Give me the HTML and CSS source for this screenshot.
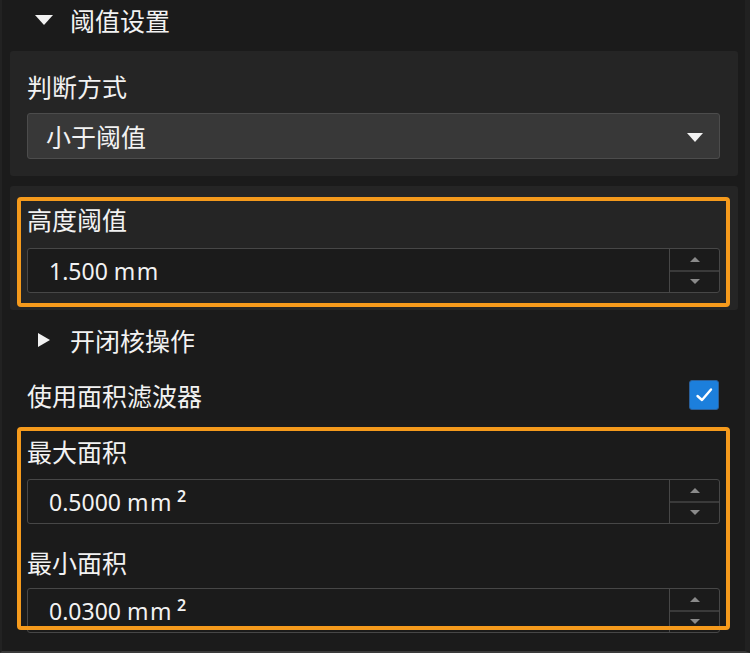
FILE: index.html
```html
<!DOCTYPE html>
<html lang="zh-CN">
<head>
    <meta charset="UTF-8">
    <title>阈值设置</title>
    <link rel="stylesheet" href="styles.css">
</head>
<body>
    <div class="panel-root">
        <div class="section-head">
            <span class="arrow-down"></span>
            <span>阈值设置</span>
        </div>

        <div class="panel">
            <div class="field-label">判断方式</div>
            <div class="select-box">
                <span>小于阈值</span>
                <span class="select-arrow"></span>
            </div>
        </div>

        <div class="panel panel-tight">
            <div class="highlight">
                <div class="field-label">高度阈值</div>
                <div class="spin-box">
                    <span class="spin-value">1.500 <span class="unit">mm</span></span>
                    <div class="spin-buttons">
                        <span class="spin-up"></span>
                        <span class="spin-down"></span>
                    </div>
                </div>
            </div>
        </div>

        <div class="section-head sub-head">
            <span class="arrow-right"></span>
            <span>开闭核操作</span>
        </div>

        <div class="check-row">
            <span>使用面积滤波器</span>
            <span class="check-box">
                <svg width="22" height="22" viewBox="0 0 22 22">
                    <path d="M4.5 12 L9 16 L18 5.5" fill="none" stroke="#ffffff" stroke-width="2.4" stroke-linecap="round" stroke-linejoin="round"/>
                </svg>
            </span>
        </div>

        <div class="highlight area-group">
            <div class="field-label">最大面积</div>
            <div class="spin-box">
                <span class="spin-value">0.5000 <span class="unit">mm</span><sup>2</sup></span>
                <div class="spin-buttons">
                    <span class="spin-up"></span>
                    <span class="spin-down"></span>
                </div>
            </div>
            <div class="field-label second">最小面积</div>
            <div class="spin-box">
                <span class="spin-value">0.0300 <span class="unit">mm</span><sup>2</sup></span>
                <div class="spin-buttons">
                    <span class="spin-up"></span>
                    <span class="spin-down"></span>
                </div>
            </div>
        </div>
    </div>
</body>
</html>
```

FILE: styles.css
```css
body {
    margin: 0;
    background-color: #1b1b1b;
    color: #f2f2f2;
    font-family: "Noto Sans", "Noto Sans CJK SC", sans-serif;
    font-size: 25px;
}
.panel-root {
    width: 750px;
    height: 653px;
    box-sizing: border-box;
    border-left: 2px solid #222222;
    border-right: 5px solid #212121;
    border-bottom: 2px solid #3a3a3a;
    overflow: hidden;
}
.section-head {
    height: 40px;
    display: flex;
    align-items: center;
    padding-left: 33px;
    margin-bottom: 11px;
}
.arrow-down {
    width: 0;
    height: 0;
    border-left: 9px solid transparent;
    border-right: 9px solid transparent;
    border-top: 10px solid #f2f2f2;
    margin-right: 17px;
}
.sub-head {
    margin: 9px 0 0;
    height: 42px;
    padding-left: 36px;
}
.arrow-right {
    width: 0;
    height: 0;
    border-top: 7.5px solid transparent;
    border-bottom: 7.5px solid transparent;
    border-left: 12px solid #f2f2f2;
    margin-right: 20px;
}
.panel {
    margin: 0 7px 10px 8px;
    padding: 19px 18px 17px 17px;
    background-color: #252525;
    border-radius: 3px;
}
.panel-tight {
    padding: 11px 8px 3px 7px;
    margin-bottom: 0;
}
.field-label {
    height: 34px;
    line-height: 34px;
    margin-bottom: 9px;
}
.select-box {
    height: 46px;
    box-sizing: border-box;
    display: flex;
    align-items: center;
    justify-content: space-between;
    padding: 0 16px 0 18px;
    background-color: #383838;
    border: 1px solid #4c4c4c;
    border-radius: 3px;
}
.select-arrow {
    width: 0;
    height: 0;
    border-left: 8px solid transparent;
    border-right: 8px solid transparent;
    border-top: 9px solid #f2f2f2;
    margin-top: 2px;
}
.highlight {
    position: relative;
    padding: 6px 10px 14px 10px;
}
.highlight::after {
    content: "";
    position: absolute;
    inset: 0;
    border: 4px solid #f59a1c;
    border-radius: 4px;
    pointer-events: none;
}
.highlight .field-label {
    margin-bottom: 11px;
}
.spin-box {
    height: 45px;
    box-sizing: border-box;
    display: flex;
    background-color: #1b1b1b;
    border: 1px solid #474747;
    border-radius: 3px;
}
.spin-value {
    flex: 1;
    display: flex;
    align-items: center;
    padding-left: 21px;
    font-size: 23px;
    white-space: pre;
}
.spin-value .unit {
    letter-spacing: 1.5px;
}
.spin-value sup {
    font-size: 16px;
    font-weight: 600;
    margin-left: 4px;
    position: relative;
    top: -6px;
}
.spin-buttons {
    width: 49px;
    display: flex;
    flex-direction: column;
    border-left: 1px solid #474747;
}
.spin-up,
.spin-down {
    flex: 1;
    display: flex;
    align-items: center;
    justify-content: center;
}
.spin-up {
    border-bottom: 2px solid #3a3a3a;
}
.spin-up::before {
    content: "";
    border-left: 5px solid transparent;
    border-right: 5px solid transparent;
    border-bottom: 5px solid #8a8a8a;
}
.spin-down::before {
    content: "";
    border-left: 5px solid transparent;
    border-right: 5px solid transparent;
    border-top: 5px solid #8a8a8a;
}
.check-row {
    height: 44px;
    margin-top: 12px;
    display: flex;
    align-items: center;
    justify-content: space-between;
    padding: 0 26px 0 25px;
}
.check-box {
    width: 30px;
    height: 30px;
    box-sizing: border-box;
    background-color: #1c7fdc;
    border: 1px solid #2a5f99;
    border-radius: 3px;
    display: flex;
    align-items: center;
    justify-content: center;
}
.area-group {
    margin: 10px 15px 0 15px;
    height: 203px;
    box-sizing: border-box;
    padding-top: 8px;
}
.area-group .field-label {
    margin-bottom: 10px;
}
.area-group .field-label.second {
    margin-top: 22px;
    margin-bottom: 8px;
}
```
